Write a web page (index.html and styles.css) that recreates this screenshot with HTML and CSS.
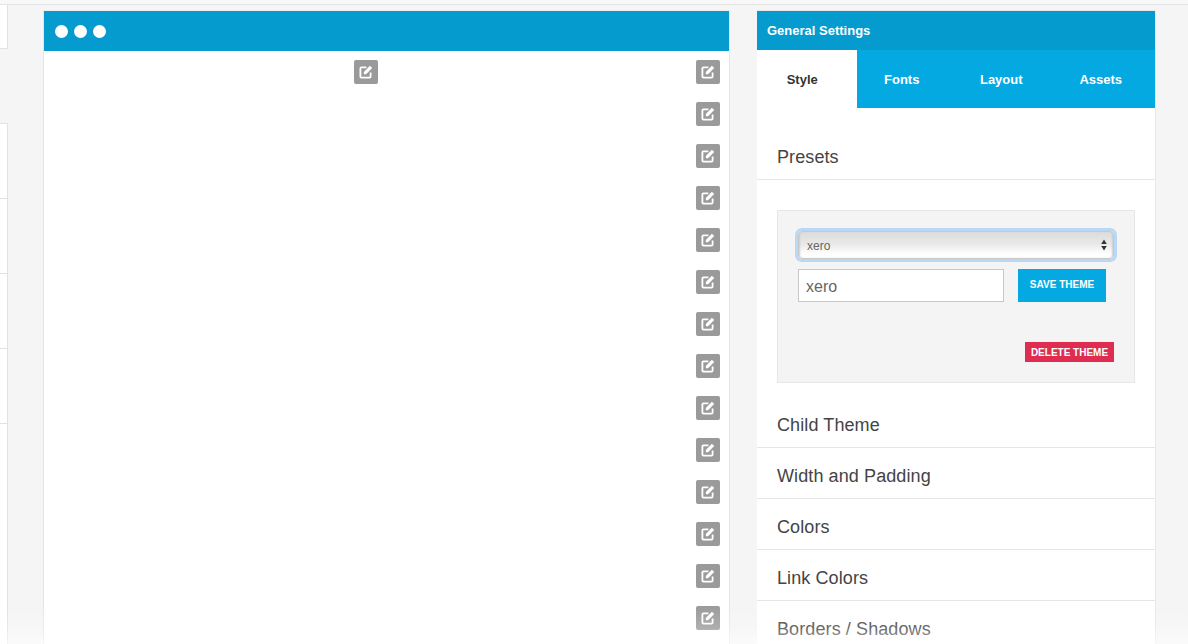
FILE: index.html
```html
<!DOCTYPE html>
<html lang="en">
<head>
<meta charset="utf-8">
<title>General Settings</title>
<link rel="stylesheet" href="styles.css">
</head>
<body>
<svg class="defs" width="0" height="0" aria-hidden="true">
  <symbol id="edit" viewBox="0 0 14 14">
    <path d="M7.4 2.4H2.4a1 1 0 0 0-1 1v8.2a1 1 0 0 0 1 1h8.2a1 1 0 0 0 1-1V7.4" fill="none" stroke="#fff" stroke-width="1.8"/>
    <path d="M4.8 9.2V6.9L10.9 .8l2.3 2.3L7.1 9.2z" fill="#fff"/>
  </symbol>
</svg>
<div class="topbar"></div>
<div class="page">
  <aside class="rail">
    <div class="rail-card rail-first"></div>
    <div class="rail-gap"></div>
    <div class="rail-card"></div>
    <div class="rail-card"></div>
    <div class="rail-card"></div>
    <div class="rail-card"></div>
    <div class="rail-rest"></div>
  </aside>
  <main class="preview">
    <div class="window-bar">
      <span class="dot"></span><span class="dot"></span><span class="dot"></span>
    </div>
    <div class="canvas">
      <div class="edit-row first-row">
        <a class="edit-btn"><svg width="14" height="14"><use href="#edit"/></svg></a>
        <a class="edit-btn"><svg width="14" height="14"><use href="#edit"/></svg></a>
      </div>
      <div class="edit-row"><a class="edit-btn"><svg width="14" height="14"><use href="#edit"/></svg></a></div>
      <div class="edit-row"><a class="edit-btn"><svg width="14" height="14"><use href="#edit"/></svg></a></div>
      <div class="edit-row"><a class="edit-btn"><svg width="14" height="14"><use href="#edit"/></svg></a></div>
      <div class="edit-row"><a class="edit-btn"><svg width="14" height="14"><use href="#edit"/></svg></a></div>
      <div class="edit-row"><a class="edit-btn"><svg width="14" height="14"><use href="#edit"/></svg></a></div>
      <div class="edit-row"><a class="edit-btn"><svg width="14" height="14"><use href="#edit"/></svg></a></div>
      <div class="edit-row"><a class="edit-btn"><svg width="14" height="14"><use href="#edit"/></svg></a></div>
      <div class="edit-row"><a class="edit-btn"><svg width="14" height="14"><use href="#edit"/></svg></a></div>
      <div class="edit-row"><a class="edit-btn"><svg width="14" height="14"><use href="#edit"/></svg></a></div>
      <div class="edit-row"><a class="edit-btn"><svg width="14" height="14"><use href="#edit"/></svg></a></div>
      <div class="edit-row"><a class="edit-btn"><svg width="14" height="14"><use href="#edit"/></svg></a></div>
      <div class="edit-row"><a class="edit-btn"><svg width="14" height="14"><use href="#edit"/></svg></a></div>
      <div class="edit-row"><a class="edit-btn"><svg width="14" height="14"><use href="#edit"/></svg></a></div>
    </div>
  </main>
  <section class="settings">
    <header class="settings-title">General Settings</header>
    <nav class="tabs">
      <a class="tab tab-active">Style</a>
      <a class="tab">Fonts</a>
      <a class="tab">Layout</a>
      <a class="tab">Assets</a>
    </nav>
    <h3 class="section section-first">Presets</h3>
    <div class="presets">
      <div class="select-wrap">
        <select class="theme-select"><option>xero</option></select>
        <svg class="select-arrows" width="6" height="12" viewBox="0 0 6 12"><path d="M3 .5 5.8 5H.2zM3 11.5 .2 7h5.6z" fill="#333"/></svg>
      </div>
      <div class="save-row">
        <input class="theme-name" type="text" value="xero">
        <button class="btn-save" type="button">SAVE THEME</button>
      </div>
      <div class="delete-row">
        <button class="btn-delete" type="button">DELETE THEME</button>
      </div>
    </div>
    <h3 class="section">Child Theme</h3>
    <h3 class="section">Width and Padding</h3>
    <h3 class="section">Colors</h3>
    <h3 class="section">Link Colors</h3>
    <h3 class="section">Borders / Shadows</h3>
  </section>
</div>
<div class="bottom-fade"></div>
</body>
</html>
```
FILE: styles.css
```css
* { box-sizing: border-box; }
html, body { height: 100%; }
body {
  margin: 0;
  overflow: hidden;
  background: #f5f5f5;
  font-family: "Liberation Sans", Arial, sans-serif;
  color: #444;
}
.defs { position: absolute; }
.topbar {
  height: 5px;
  background: #f8f8f8;
  border-bottom: 1px solid #e4e4e4;
}
.page {
  display: flex;
  align-items: flex-start;
  height: 639px;
  overflow: hidden;
}
.rail {
  width: 8px;
  flex: none;
  display: flex;
  flex-direction: column;
}
.rail-card {
  height: 75px;
  background: #fff;
  border-right: 1px solid #e2e2e2;
  border-bottom: 1px solid #e2e2e2;
}
.rail-first { height: 44px; }
.rail-gap { height: 75px; border-bottom: 1px solid #e2e2e2; }
.rail-rest {
  height: 300px;
  background: #fff;
  border-right: 1px solid #e2e2e2;
}
.preview {
  width: 687px;
  flex: none;
  margin: 5px 0 0 35px;
  background: #fff;
  border: 1px solid #e6e6e6;
  border-top-color: #eee;
  border-bottom: 0;
  height: 640px;
}
.window-bar {
  height: 40px;
  background: #059bcf;
  display: flex;
  align-items: center;
  gap: 6px;
  padding-left: 11px;
}
.dot {
  width: 13px;
  height: 13px;
  border-radius: 50%;
  background: #fff;
}
.canvas {
  padding: 9px 9px 0 0;
  display: flex;
  flex-direction: column;
  gap: 18px;
}
.edit-row {
  display: flex;
  justify-content: flex-end;
}
.first-row { justify-content: space-between; padding-left: 310px; }
.edit-btn {
  width: 24px;
  height: 24px;
  background: #9a9a9a;
  border-radius: 2px;
  display: flex;
  align-items: center;
  justify-content: center;
}
.settings {
  width: 399px;
  flex: none;
  margin: 5px 0 0 27px;
  background: #fff;
  border: 1px solid #e8e8e8;
  border-width: 1px 1px 0 0;
  height: 640px;
}
.settings-title {
  height: 39px;
  background: #059bcf;
  color: #fff;
  font-size: 13px;
  font-weight: 700;
  line-height: 39px;
  padding-left: 10px;
}
.tabs {
  display: grid;
  grid-template-columns: repeat(4, 1fr);
  height: 58px;
  background: #05a9e2;
  font-size: 13px;
  font-weight: 700;
  color: #fff;
}
.tab {
  padding-right: 9px;
  text-align: center;
  line-height: 59px;
}
.tab-active {
  background: #fff;
  color: #333;
}
.section {
  margin: 0;
  height: 51px;
  padding: 8px 0 0 20px;
  font-size: 18px;
  font-weight: 400;
  line-height: 40px;
  letter-spacing: .1px;
  color: #444;
  border-bottom: 1px solid #e5e5e5;
}
.section-first {
  height: 72px;
  padding-top: 29px;
  margin-bottom: 30px;
}
.presets {
  margin: 0 20px 14px;
  height: 173px;
  background: #f4f4f4;
  border: 1px solid #e6e6e6;
  padding: 20px 0 0 20px;
}
.select-wrap {
  position: relative;
  width: 316px;
  height: 28px;
}
.theme-select {
  appearance: none;
  display: block;
  width: 316px;
  height: 28px;
  padding: 2px 8px 0;
  font-family: inherit;
  font-size: 12px;
  color: #666;
  border: 1px solid #c8c8c8;
  border-radius: 4px;
  background: linear-gradient(#dcdcdc 0%, #e8e8e8 45%, #fff 85%, #fff 100%);
  box-shadow: 0 0 0 3px #b8d8f5, inset 2px 0 2px -1px #ccc, inset -2px 0 2px -1px #ccc;
  outline: 0;
}
.select-arrows {
  position: absolute;
  right: 7px;
  top: 8px;
}
.save-row {
  display: flex;
  align-items: flex-start;
  gap: 14px;
  margin-top: 10px;
}
.theme-name {
  width: 206px;
  height: 33px;
  padding: 2px 7px 0;
  border: 1px solid #c8c8c8;
  background: #fff;
  font-family: inherit;
  font-size: 16px;
  color: #666;
  outline: 0;
  border-radius: 0;
}
.btn-save {
  width: 88px;
  height: 33px;
  padding: 0 0 3px;
  border: 0;
  background: #05a9e2;
  color: #fff;
  font-family: inherit;
  font-size: 10px;
  font-weight: 700;
}
.delete-row {
  display: flex;
  justify-content: flex-end;
  width: 316px;
  margin-top: 40px;
}
.btn-delete {
  width: 89px;
  height: 20px;
  padding: 0;
  border: 0;
  background: #de2d50;
  color: #fff;
  font-family: inherit;
  font-size: 10px;
  font-weight: 700;
}
.bottom-fade {
  position: fixed;
  left: 0;
  right: 0;
  bottom: 0;
  height: 40px;
  background: linear-gradient(rgba(255,255,255,0), rgba(255,255,255,.2) 60%, rgba(255,255,255,.6));
  pointer-events: none;
}
```
